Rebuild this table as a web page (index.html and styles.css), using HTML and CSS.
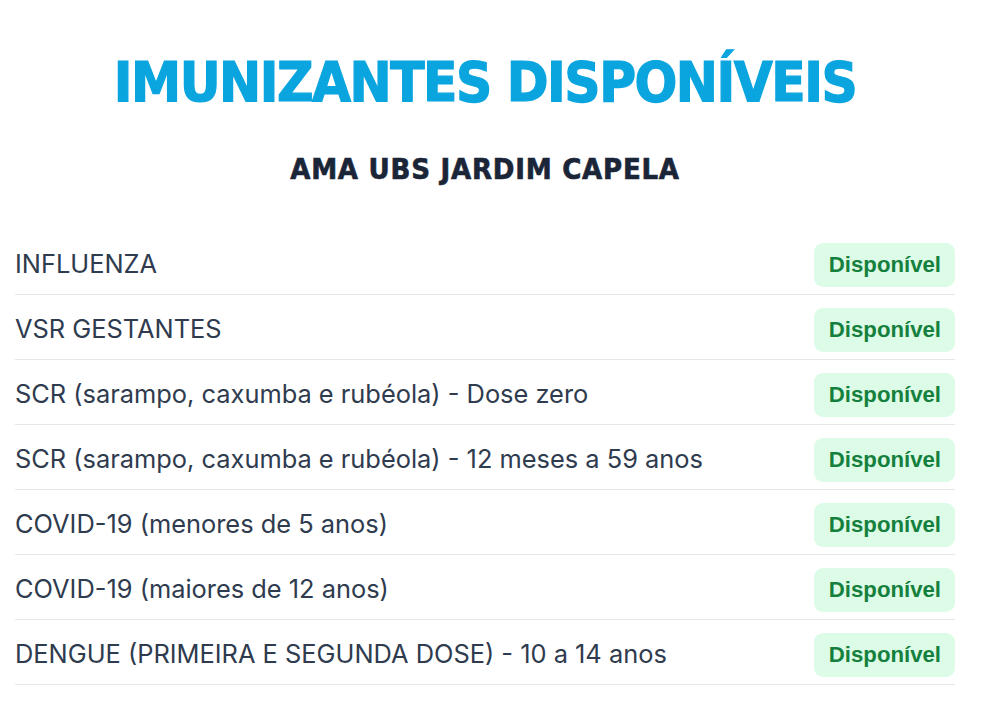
FILE: index.html
```html
<!DOCTYPE html>
<html lang="pt-BR">
<head>
<meta charset="utf-8">
<title>Imunizantes disponíveis</title>
<link rel="stylesheet" href="styles.css">
</head>
<body>
<main class="page">
  <header class="head">
    <h1 class="title">IMUNIZANTES DISPONÍVEIS</h1>
    <h2 class="subtitle">AMA UBS JARDIM CAPELA</h2>
  </header>
  <ul class="list">
    <li class="row"><span class="name">INFLUENZA</span><span class="badge">Disponível</span></li>
    <li class="row"><span class="name">VSR GESTANTES</span><span class="badge">Disponível</span></li>
    <li class="row"><span class="name">SCR (sarampo, caxumba e rubéola) - Dose zero</span><span class="badge">Disponível</span></li>
    <li class="row"><span class="name">SCR (sarampo, caxumba e rubéola) - 12 meses a 59 anos</span><span class="badge">Disponível</span></li>
    <li class="row"><span class="name">COVID-19 (menores de 5 anos)</span><span class="badge">Disponível</span></li>
    <li class="row"><span class="name">COVID-19 (maiores de 12 anos)</span><span class="badge">Disponível</span></li>
    <li class="row"><span class="name">DENGUE (PRIMEIRA E SEGUNDA DOSE) - 10 a 14 anos</span><span class="badge">Disponível</span></li>
  </ul>
</main>
</body>
</html>
```
FILE: styles.css
```css
html, body {
  margin: 0;
  padding: 0;
  background: #ffffff;
}
.page {
  width: 940px;
  margin-left: 15px;
  padding-top: 52px;
}
.head {
  display: flex;
  flex-direction: column;
  align-items: center;
}
.title {
  margin: 0;
  font-family: "DejaVu Sans", sans-serif;
  font-stretch: condensed;
  font-weight: 700;
  font-size: 56px;
  line-height: 60px;
  color: #0aa5df;
  letter-spacing: -1.5px;
  -webkit-text-stroke: 1.2px #0aa5df;
}
.subtitle {
  margin: 40px 0 0;
  font-family: "DejaVu Sans", sans-serif;
  font-stretch: condensed;
  font-weight: 700;
  font-size: 29px;
  line-height: 34px;
  color: #1b2538;
  letter-spacing: 0.75px;
  -webkit-text-stroke: 0.6px #1b2538;
}
.list {
  list-style: none;
  margin: 44px 0 0;
  padding: 0;
}
.row {
  display: flex;
  align-items: center;
  justify-content: space-between;
  padding: 13px 0 7px;
  border-bottom: 1px solid #e5e7eb;
}
.name {
  font-family: "Inter", sans-serif;
  font-size: 25.4px;
  color: #2f3b4e;
  margin-bottom: 4px;
}
.badge {
  font-family: "Liberation Sans", Arial, sans-serif;
  font-weight: 700;
  font-size: 22.2px;
  line-height: 44px;
  height: 44px;
  padding: 0 14px 0 15px;
  border-radius: 9px;
  background: #dcfce7;
  color: #15803d;
}
```
